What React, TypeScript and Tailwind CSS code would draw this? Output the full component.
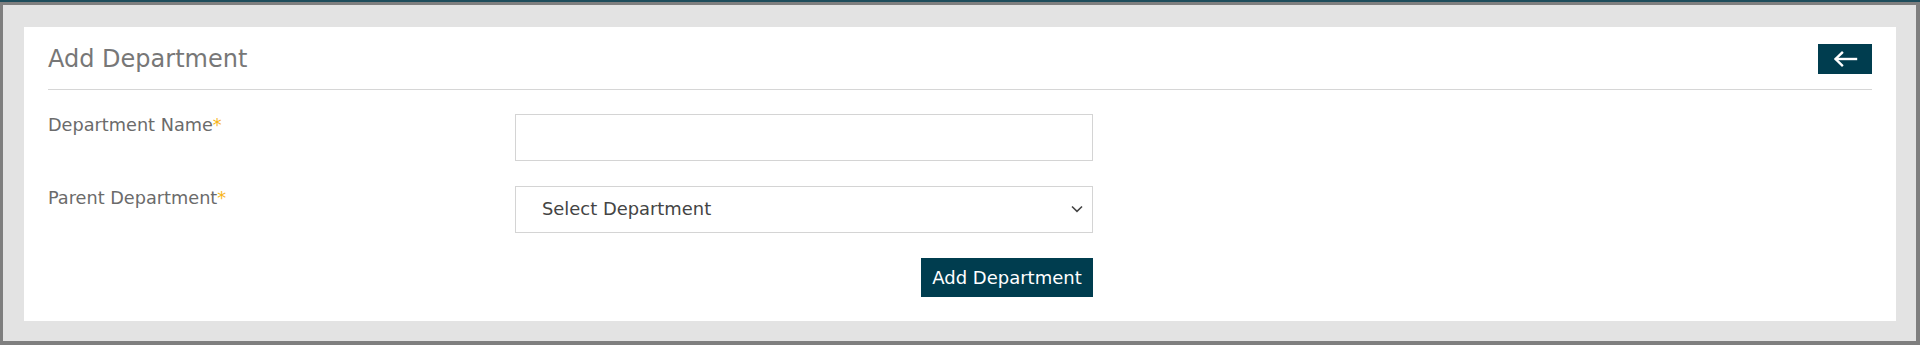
export default function App() {
  return (
    <div className="h-[345px] w-full border-t-2 border-[#1e4d5c] bg-[#e3e3e3] font-['DejaVu_Sans',Verdana,sans-serif]">
      <div className="h-full border-t-[3px] border-r-4 border-b-4 border-l-[3px] border-[#7f7f7f] pt-[22px] pr-5 pb-5 pl-[21px]">
        <div className="bg-white px-6">
          <div className="flex items-center justify-between border-b border-[#d6d6d6] pt-[17px] pb-[15px]">
            <h1 className="text-[24px] leading-[30px] font-normal text-[#777777]">Add Department</h1>
            <button className="grid h-[30px] w-[54px] place-items-center bg-[#003d4f]">
              <svg width="25" height="16" viewBox="0 0 25 16" fill="none" stroke="white" strokeWidth="2.4" strokeLinecap="square">
                <path d="M3 8h20" />
                <path d="M9 1.8 2.6 8 9 14.2" strokeLinejoin="miter" />
              </svg>
            </button>
          </div>

          <div className="flex w-[1045px] flex-col gap-[25px] pt-6 pb-6">
            <div className="flex items-start">
              <label className="mt-px w-[467px] text-[17.7px] leading-[20px] text-[#6b6b6b]">
                Department Name<span className="text-[#f7b519]">*</span>
              </label>
              <input
                type="text"
                className="h-[47px] w-[578px] border border-[#d4d4d4] px-4 text-[18px] text-[#444] outline-none"
              />
            </div>

            <div className="flex items-start">
              <label className="mt-[2px] w-[467px] text-[17.7px] leading-[20px] text-[#6b6b6b]">
                Parent Department<span className="text-[#f7b519]">*</span>
              </label>
              <div className="relative w-[578px]">
                <select className="h-[47px] w-full appearance-none border border-[#d4d4d4] bg-white pl-[26px] text-[17.9px] text-[#444] outline-none">
                  <option>Select Department</option>
                </select>
                <svg
                  className="pointer-events-none absolute top-[19px] right-[10px]"
                  width="12"
                  height="8"
                  viewBox="0 0 12 8"
                  fill="none"
                  stroke="#444"
                  strokeWidth="1.6"
                >
                  <path d="M1 1.5 6 6.3 11 1.5" />
                </svg>
              </div>
            </div>

            <div className="flex justify-end">
              <button className="h-[39px] w-[172px] bg-[#003d4f] text-[18px] text-white">Add Department</button>
            </div>
          </div>
        </div>
      </div>
    </div>
  );
}
